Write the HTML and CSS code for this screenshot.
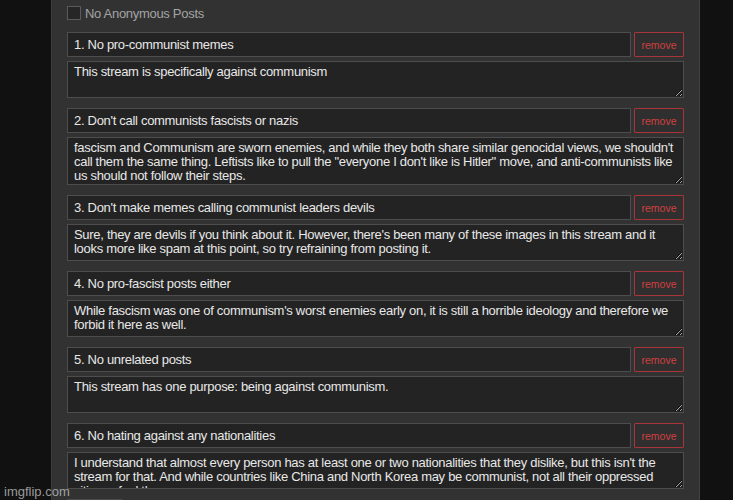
FILE: index.html
```html
<!DOCTYPE html>
<html>
<head>
<meta charset="utf-8">
<link rel="stylesheet" href="styles.css">
</head>
<body>
<div class="page">
  <div class="panel">
    <label class="check-row"><span class="box"></span><span class="check-label">No Anonymous Posts</span></label>
    <div class="rules">
      <div class="rule">
        <div class="rule-head"><input class="title" value="1. No pro-communist memes" readonly><button class="remove">remove</button></div>
        <textarea class="desc" readonly>This stream is specifically against communism</textarea>
      </div>
      <div class="rule">
        <div class="rule-head"><input class="title" value="2. Don't call communists fascists or nazis" readonly><button class="remove">remove</button></div>
        <textarea class="desc tall" readonly>fascism and Communism are sworn enemies, and while they both share similar genocidal views, we shouldn't call them the same thing. Leftists like to pull the "everyone I don't like is Hitler" move, and anti-communists like us should not follow their steps.</textarea>
      </div>
      <div class="rule">
        <div class="rule-head"><input class="title" value="3. Don't make memes calling communist leaders devils" readonly><button class="remove">remove</button></div>
        <textarea class="desc" readonly>Sure, they are devils if you think about it. However, there's been many of these images in this stream and it looks more like spam at this point, so try refraining from posting it.</textarea>
      </div>
      <div class="rule">
        <div class="rule-head"><input class="title" value="4. No pro-fascist posts either" readonly><button class="remove">remove</button></div>
        <textarea class="desc" readonly>While fascism was one of communism's worst enemies early on, it is still a horrible ideology and therefore we forbid it here as well.</textarea>
      </div>
      <div class="rule">
        <div class="rule-head"><input class="title" value="5. No unrelated posts" readonly><button class="remove">remove</button></div>
        <textarea class="desc" readonly>This stream has one purpose: being against communism.</textarea>
      </div>
      <div class="rule">
        <div class="rule-head"><input class="title" value="6. No hating against any nationalities" readonly><button class="remove">remove</button></div>
        <textarea class="desc" readonly>I understand that almost every person has at least one or two nationalities that they dislike, but this isn't the stream for that. And while countries like China and North Korea may be communist, not all their oppressed citizens feel the same way.</textarea>
      </div>
      <div class="add-box"></div>
    </div>
  </div>
</div>
<div class="watermark">imgflip.com</div>
</body>
</html>
```

FILE: styles.css
```css
html, body {
  margin: 0;
  padding: 0;
  height: 100%;
  overflow: hidden;
  background: #111111;
  font-family: "Liberation Sans", Arial, sans-serif;
}

.page {
  display: flex;
  padding-left: 51px;
  height: 100%;
}

.panel {
  width: 649px;
  background: #323232;
  border-left: 1px solid #3d3d3d;
  border-right: 1px solid #424242;
  padding: 6px 15px 0 15px;
  box-sizing: border-box;
}

.check-row {
  display: flex;
  align-items: center;
  gap: 4px;
  height: 14px;
  margin-bottom: 12px;
}

.box {
  width: 12px;
  height: 12px;
  border: 1px solid #5a5a5a;
  background: #262626;
}

.check-label {
  font-size: 13px;
  letter-spacing: -0.3px;
  color: #a4a4a4;
}

.rules {
  display: flex;
  flex-direction: column;
  gap: 10px;
  width: 617px;
}

.rule {
  display: flex;
  flex-direction: column;
  gap: 4px;
}

.rule-head {
  display: flex;
  gap: 3px;
}

.title {
  flex: 1;
  height: 25px;
  box-sizing: border-box;
  background: #232323;
  border: 1px solid #4d4d4d;
  color: #e8e8e8;
  font-family: "Liberation Sans", Arial, sans-serif;
  font-size: 13px;
  letter-spacing: -0.3px;
  padding: 0 6px;
  margin: 0;
  outline: none;
}

.remove {
  width: 50px;
  height: 25px;
  box-sizing: border-box;
  background: #2f2f2f;
  border: 1px solid #a8353a;
  border-radius: 1px;
  color: #d0403f;
  font-family: "Liberation Sans", Arial, sans-serif;
  font-size: 10.5px;
  padding: 0;
  margin: 0;
}

.desc {
  display: block;
  width: 617px;
  height: 37px;
  box-sizing: border-box;
  background: #232323;
  border: 1px solid #4d4d4d;
  color: #e8e8e8;
  font-family: "Liberation Sans", Arial, sans-serif;
  font-size: 13px;
  letter-spacing: -0.3px;
  line-height: 14px;
  padding: 3px 6px;
  margin: 0;
  resize: vertical;
  overflow: hidden;
  outline: none;
  color-scheme: dark;
}

.desc.tall {
  height: 48px;
}

.add-box {
  width: 53px;
  height: 20px;
  border: 1px solid #4a4a4a;
  background: #2c2c2c;
}

.watermark {
  position: absolute;
  left: 4px;
  bottom: 1px;
  font-family: "Liberation Sans", Arial, sans-serif;
  font-size: 13px;
  color: rgba(200, 200, 200, 0.75);
}
```
